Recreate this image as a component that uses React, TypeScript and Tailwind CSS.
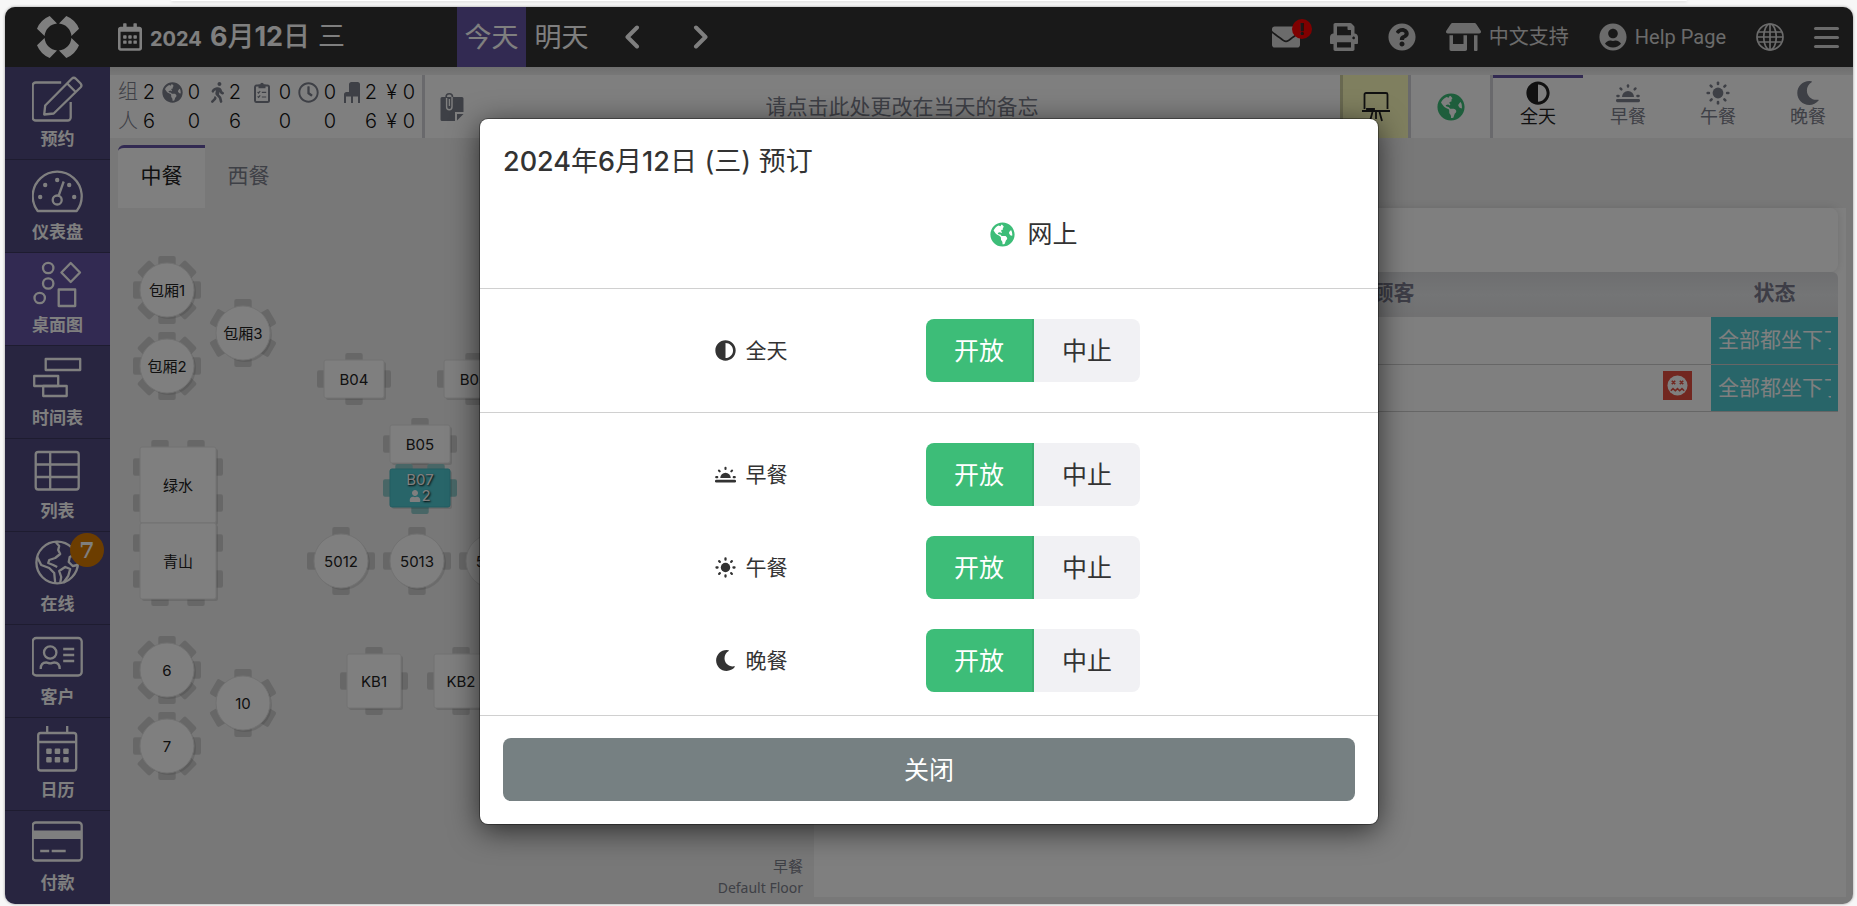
import type { ReactNode } from "react";
import {
  FaAdjust,
  FaEnvelope,
  FaGlobeAmericas,
  FaMoon,
  FaPrint,
  FaQuestionCircle,
  FaRegCalendarAlt,
  FaRegClock,
  FaStoreAlt,
  FaUser,
  FaUserCircle,
  FaWalking,
} from "react-icons/fa";

/* ---------- Small solid icons ---------- */

function SunIcon({ className }: { className?: string }) {
  return (
    <svg viewBox="0 0 24 24" className={className} fill="currentColor" aria-hidden="true">
      <circle cx="12" cy="12" r="5.4" />
      {[0, 45, 90, 135, 180, 225, 270, 315].map((a) => (
        <rect key={a} x="10.7" y="0.4" width="2.6" height="3.8" rx="1.2" transform={`rotate(${a} 12 12)`} />
      ))}
    </svg>
  );
}

function SunriseIcon({ className }: { className?: string }) {
  return (
    <svg viewBox="0 0 24 24" className={className} fill="currentColor" aria-hidden="true">
      <path d="M6 16a6 6 0 0 1 12 0Z" />
      {[-90, -45, 0, 45, 90].map((a) => (
        <rect key={a} x="10.8" y="3.2" width="2.4" height="3.6" rx="1.1" transform={`rotate(${a} 12 15)`} />
      ))}
      <rect x="0" y="18" width="24" height="3.2" rx="1.4" />
    </svg>
  );
}

function ClipboardIcon({ className }: { className?: string }) {
  return (
    <svg viewBox="0 0 16 21" className={className} fill="none" stroke="currentColor" aria-hidden="true">
      <rect x="1" y="3.6" width="14" height="16.4" rx="1.5" strokeWidth="2" />
      <path d="M4.5 2.5h1.7a1.8 1.8 0 0 1 3.6 0h1.7v3.8h-7Z" fill="currentColor" stroke="none" />
      <path d="m3.6 10 1 1 1.6-2M3.6 14.4l1 1 1.6-2M7.8 10.4h4.4M7.8 15h4.4" strokeWidth="1.2" />
    </svg>
  );
}

function ChairIcon({ className }: { className?: string }) {
  return (
    <svg viewBox="0 0 16 21" className={className} fill="currentColor" aria-hidden="true">
      <path d="M5 2.5A2.5 2.5 0 0 1 7.500 0h6A2.500 2.500 0 0 1 16 2.500V21h-2v-6.500H9V21H7v-6.500H2V21H0v-8.500C0 11 1 10 2.500 10H5Z" />
    </svg>
  );
}

function NoteIcon({ className }: { className?: string }) {
  return (
    <svg viewBox="0 0 24 28" className={className} aria-hidden="true">
      <path d="M2 4h20a1.500 1.500 0 0 1 1.500 1.500V19H15v9H2a1.500 1.500 0 0 1-1.500-1.500v-21A1.500 1.500 0 0 1 2 4Z" fill="currentColor" />
      <path d="M17 21h6.500L17 27.500Z" fill="currentColor" />
      <path d="M12.500 6v8a3.200 3.200 0 0 1-6.400 0V4a3.200 3.200 0 0 1 6.400 0" fill="none" stroke="currentColor" strokeWidth="1.600" />
      <path d="M12 4v10a2.700 2.700 0 0 1-5.400 0V5" fill="none" stroke="#fff" strokeWidth="1.400" />
      <path d="M9.400 6v7" stroke="#fff" strokeWidth="1.300" />
    </svg>
  );
}

function EaselIcon({ className }: { className?: string }) {
  return (
    <svg viewBox="0 0 28 30" className={className} fill="none" stroke="currentColor" strokeWidth="1.800" aria-hidden="true">
      <path d="M2.500 17V2.500a1.500 1.500 0 0 1 1.500-1.500h20a1.500 1.500 0 0 1 1.500 1.500V17M0 19h28M10.500 20 8 29M14 20v7M17.500 20l2.500 9" />
      <path d="M5 17h7v2H5Z" fill="currentColor" />
    </svg>
  );
}

function GlobeLineIcon({ className }: { className?: string }) {
  return (
    <svg viewBox="0 0 28 28" className={className} fill="none" stroke="currentColor" strokeWidth="1.700" aria-hidden="true">
      <circle cx="14" cy="14" r="13" />
      <ellipse cx="14" cy="14" rx="6.300" ry="13" />
      <path d="M14 1v26M2.500 9h23M2.500 19h23M1 14h26" />
    </svg>
  );
}

function DizzyIcon({ className }: { className?: string }) {
  return (
    <svg viewBox="0 0 22 22" className={className} aria-hidden="true">
      <circle cx="11" cy="11" r="10.500" fill="#fff" />
      <path
        d="m5 6 3.600 3.600M8.600 6 5 9.600M13.400 6 17 9.600M17 6l-3.600 3.600M4 16.500l2.300-2.200 2.400 2.200 2.300-2.200 2.300 2.200 2.400-2.200 2.300 2.200"
        fill="none"
        stroke="#e44f40"
        strokeWidth="1.700"
      />
    </svg>
  );
}

function Logo() {
  return (
    <svg viewBox="-23 -23 46 46" className="size-[46px]" fill="currentColor" aria-hidden="true">
      {[0, 90, 180, 270].map((a) => (
        <path
          key={a}
          transform={`rotate(${a})`}
          d="M8.300-21 1-13.400A13.500 13.500 0 0 1 13.400-1L21-8.300A23 23 0 0 0 8.300-21Z"
        />
      ))}
    </svg>
  );
}

/* ---------- Sidebar ---------- */

const navItems: { label: string; active?: boolean; badge?: number; art: ReactNode }[] = [
  {
    label: "预约",
    art: (
      <>
        <path d="M30 7.500H4.500A3 3 0 0 0 1.500 10.500v32a3 3 0 0 0 3 3h32a3 3 0 0 0 3-3V27" />
        <path d="M13 39.500l1-9L40.500 3.800a3 3 0 0 1 4.200 0l4.500 4.500a3 3 0 0 1 0 4.200L22.500 38.500ZM36 8.500l8.500 8.500" />
      </>
    ),
  },
  {
    label: "仪表盘",
    art: (
      <>
        <path d="M6.500 43a24.500 24.500 0 1 1 39 0Z" />
        <circle cx="26" cy="32" r="4.500" />
        <path d="m27.500 27.500 5-14" />
        <g fill="currentColor" stroke="none">
          <circle cx="9" cy="29" r="2.200" />
          <circle cx="14" cy="17" r="2.200" />
          <circle cx="26" cy="12" r="2.200" />
          <circle cx="38" cy="17" r="2.200" />
          <circle cx="43" cy="29" r="2.200" />
        </g>
      </>
    ),
  },
  {
    label: "桌面图",
    active: true,
    art: (
      <>
        <circle cx="17" cy="7" r="5.200" />
        <circle cx="17" cy="22.500" r="5.200" />
        <circle cx="8.500" cy="37" r="5.200" />
        <path d="m39.500 2 9.300 9.500-9.300 9.500-9.300-9.500Z" />
        <rect x="27.500" y="28.500" width="16.500" height="16.500" />
      </>
    ),
  },
  {
    label: "时间表",
    art: (
      <>
        <rect x="14.500" y="5" width="34.500" height="11" />
        <rect x="3" y="22" width="24" height="10" />
        <rect x="12" y="32" width="23.500" height="10" />
      </>
    ),
  },
  {
    label: "列表",
    art: (
      <>
        <rect x="4.500" y="5" width="43" height="37.500" rx="2.500" />
        <path d="M19 5v37.500M4.500 17.500h43M4.500 30h43" />
      </>
    ),
  },
  {
    label: "在线",
    badge: 7,
    art: (
      <>
        <circle cx="26" cy="22.500" r="20.800" />
        <path d="M24.500 2l3.500 4-1 4 2 4-5 4-6 2-1 3 5 2 4 2M6 17l4 8 8 3 5 5 1 10M29 43l1-6-2-6 6-4 5 2-2 7-5 7M44.500 14l-6 3-1 5 4 4 5-1" />
      </>
    ),
  },
  {
    label: "客户",
    art: (
      <>
        <rect x="1.500" y="5" width="49" height="37.500" rx="3.500" />
        <circle cx="19" cy="19.500" r="6.200" />
        <path d="M9.500 36c0-4.500 2.500-6.500 5.500-6.500 1.500 0 2 .8 4 .8s2.500-.8 4-.8c3 0 5.500 2 5.500 6.500M32 16h11M32 22h11M32 28h11" />
      </>
    ),
  },
  {
    label: "日历",
    art: (
      <>
        <rect x="7" y="7" width="38" height="37.500" rx="2.500" />
        <path d="M7 16h38M16 0v7M36 0v7" />
        <g fill="currentColor" stroke="none">
          {[15, 23.5, 32].map((x) => (
            <g key={x}>
              <rect x={x} y="22.500" width="5.500" height="5.500" rx="1" />
              <rect x={x} y="31" width="5.500" height="5.500" rx="1" />
            </g>
          ))}
        </g>
      </>
    ),
  },
  {
    label: "付款",
    art: (
      <>
        <rect x="1.500" y="3.500" width="49" height="38" rx="3" />
        <path d="M1.500 11.500h49v8.500h-49Z" fill="currentColor" stroke="none" />
        <path d="M9 32h9M20.500 32h14" />
      </>
    ),
  },
];

function Sidebar() {
  return (
    <nav className="flex w-[105px] shrink-0 flex-col bg-[#504a80]">
      {navItems.map((item) => (
        <a
          key={item.label}
          href="#"
          className={`relative flex min-h-[93px] flex-1 flex-col items-center gap-1 border-b border-[#3c3860] pt-2 text-[17px] leading-6 font-bold text-white last:border-b-0 ${
            item.active ? "bg-[#6454a4]" : ""
          }`}
        >
          <svg viewBox="0.8 0 52 48" className="h-12 w-[52px]" fill="none" stroke="currentColor" strokeWidth="2.300" strokeLinejoin="round" aria-hidden="true">
            {item.art}
          </svg>
          {item.label}
          {item.badge && (
            <span className="absolute top-px right-1.5 flex size-[34px] items-center justify-center rounded-full bg-[#d97b00] font-['DejaVu_Serif',serif] text-[22px]">
              {item.badge}
            </span>
          )}
        </a>
      ))}
    </nav>
  );
}

/* ---------- Header ---------- */

function Header() {
  return (
    <header className="flex h-[60px] shrink-0 items-stretch bg-[#333] text-white">
      <a href="#" aria-label="Home" className="flex w-[105px] shrink-0 items-center justify-center">
        <Logo />
      </a>
      <button className="flex w-[347px] shrink-0 items-center gap-2 pl-2 font-bold">
        <FaRegCalendarAlt className="h-7 w-6 shrink-0" />
        <span className="pt-1 text-[20px] leading-8">2024</span>
        <span className="text-[27px] leading-8">
          6<span className="font-medium">月</span>12<span className="font-medium">日</span>
          <span className="pl-2 font-normal">三</span>
        </span>
      </button>
      <button className="w-[69px] bg-[#6454a4] pt-0.5 text-[27px]">今天</button>
      <button className="w-[71px] pt-0.5 text-[27px]">明天</button>
      <button aria-label="Previous day" className="flex w-[70px] items-center justify-center">
        <svg viewBox="0 0 16 24" className="h-6 w-4" fill="none" stroke="currentColor" strokeWidth="4" strokeLinecap="round" strokeLinejoin="round">
          <path d="M13 2.500 3.500 12l9.500 9.500" />
        </svg>
      </button>
      <button aria-label="Next day" className="flex w-[68px] items-center justify-center">
        <svg viewBox="0 0 16 24" className="h-6 w-4" fill="none" stroke="currentColor" strokeWidth="4" strokeLinecap="round" strokeLinejoin="round">
          <path d="m3 2.500 9.500 9.500L3 21.500" />
        </svg>
      </button>
      <div className="ml-auto flex items-center gap-[30px] pr-[14px] text-[20px] text-[#d6d6d6]">
        <button aria-label="Messages" className="relative">
          <FaEnvelope className="size-7" />
          <span className="absolute -top-1 -right-3 flex size-5 items-center justify-center rounded-full bg-[#ff0000] text-[16px] leading-none font-black text-[#333]">
            !
          </span>
        </button>
        <button aria-label="Print">
          <FaPrint className="size-7" />
        </button>
        <button aria-label="Help">
          <FaQuestionCircle className="size-7" />
        </button>
        <a href="#" className="flex items-center gap-2">
          <FaStoreAlt className="h-7 w-[35px]" />
          中文支持
        </a>
        <a href="#" className="flex items-center gap-2">
          <FaUserCircle className="size-7" />
          <span className="font-['Roboto',sans-serif]">Help Page</span>
        </a>
        <button aria-label="Language">
          <GlobeLineIcon className="size-7" />
        </button>
        <button aria-label="Menu" className="flex w-[25px] flex-col gap-[6px]">
          <span className="h-[3px] rounded-full bg-current" />
          <span className="h-[3px] rounded-full bg-current" />
          <span className="h-[3px] rounded-full bg-current" />
        </button>
      </div>
    </header>
  );
}

/* ---------- Day summary bar ---------- */

function Stat({ icon, value }: { icon?: ReactNode; value: string }) {
  return (
    <span className="flex items-center justify-end gap-[5px]">
      <span className="text-[#7d808c]">{icon}</span>
      {value}
    </span>
  );
}

const meals = [
  { label: "全天", icon: <FaAdjust className="size-full" /> },
  { label: "早餐", icon: <SunriseIcon className="size-full" /> },
  { label: "午餐", icon: <SunIcon className="size-full" /> },
  { label: "晚餐", icon: <FaMoon className="size-full" /> },
];

function SummaryBar() {
  return (
    <div className="bg-gradient-to-b from-[#dedede] to-[#f0f0f0] to-[8px] pt-2">
      <div className="flex h-[63px] bg-white">
        <div className="grid w-[312px] shrink-0 grid-cols-[20px_17px_45px_41px_50px_45px_41px_38px] content-center pl-2 text-[20px] leading-[29px] font-light text-[#111]">
          <span className="text-[#7d808c]">组</span>
          <Stat value="2" />
          <Stat icon={<FaGlobeAmericas className="size-[21px]" />} value="0" />
          <Stat icon={<FaWalking className="h-[21px] w-[13px]" />} value="2" />
          <Stat icon={<ClipboardIcon className="mr-1 h-[21px] w-4" />} value="0" />
          <Stat icon={<FaRegClock className="size-[21px]" />} value="0" />
          <Stat icon={<ChairIcon className="h-[21px] w-4" />} value="2" />
          <Stat value="¥ 0" />
          <span className="text-[#7d808c]">人</span>
          <Stat value="6" />
          <Stat value="0" />
          <Stat value="6" />
          <Stat value="0" />
          <Stat value="0" />
          <Stat value="6" />
          <Stat value="¥ 0" />
        </div>
        <button className="flex flex-1 items-center border-l-[3px] border-[#d2d3d8] pl-[15px] text-[21px] text-[#7d808c]">
          <NoteIcon className="h-7 w-6" />
          <span className="flex-1 text-center">请点击此处更改在当天的备忘</span>
        </button>
        <button aria-label="Floor plan" className="flex w-[68px] items-center justify-center border-l-[3px] border-[#d0d0a0] bg-[#ffffbf] text-[#222]">
          <EaselIcon className="h-[30px] w-7" />
        </button>
        <button aria-label="Online booking" className="flex w-[82px] items-center justify-center border-l-[3px] border-[#d2d3d8] text-[#3dbd78]">
          <FaGlobeAmericas className="size-7" />
        </button>
        <div className="flex border-l-[3px] border-[#d2d3d8]">
          {meals.map((m, i) => (
            <button
              key={m.label}
              className={`flex w-[90px] flex-col items-center border-t-[3px] pt-[3px] text-[18px] leading-6 ${
                i === 0 ? "border-[#6454a4] text-[#222]" : "border-transparent text-[#7d808c]"
              }`}
            >
              <span className="size-6">{m.icon}</span>
              {m.label}
            </button>
          ))}
        </div>
      </div>
    </div>
  );
}

/* ---------- Floor plan ---------- */

type Chair = { x: number; y: number; a: number };
type FloorTable = {
  label: string;
  x: number;
  y: number;
  w: number;
  h: number;
  round?: boolean;
  chairs: Chair[];
  guests?: number;
};

const ring = (angles: number[]): Chair[] => angles.map((a) => ({ x: 0, y: -27, a }));
const eight = ring([0, 45, 90, 135, 180, 225, 270, 315]);
const six = ring([0, 60, 120, 180, 240, 300]);
const four = ring([0, 90, 180, 270]);

const sides = (hw: number, hh: number): Chair[] => [
  { x: 0, y: -hh, a: 0 },
  { x: 0, y: -hw, a: 90 },
  { x: 0, y: -hh, a: 180 },
  { x: 0, y: -hw, a: 270 },
];

const pairs = (top: number): Chair[] => [
  { x: -18, y: -38, a: top },
  { x: 18, y: -38, a: top },
  { x: -18, y: -38, a: 90 },
  { x: 18, y: -38, a: 90 },
  { x: -18, y: -38, a: 270 },
  { x: 18, y: -38, a: 270 },
];

const bigTop = pairs(0);
const bigBottom = pairs(180);

const floorTables: FloorTable[] = [
  { label: "包厢1", x: 57, y: 82, w: 54, h: 54, round: true, chairs: eight },
  { label: "包厢2", x: 57, y: 158, w: 54, h: 54, round: true, chairs: eight },
  { label: "包厢3", x: 133, y: 125, w: 54, h: 54, round: true, chairs: six },
  { label: "B04", x: 244, y: 171, w: 60, h: 38, chairs: sides(30, 19) },
  { label: "B03", x: 364, y: 171, w: 60, h: 38, chairs: sides(30, 19) },
  { label: "B05", x: 310, y: 236, w: 60, h: 38, chairs: sides(30, 19) },
  {
    label: "B07",
    x: 310,
    y: 280,
    w: 60,
    h: 38,
    guests: 2,
    chairs: [
      { x: -16, y: -17, a: 0 },
      { x: 16, y: -17, a: 0 },
      { x: 0, y: -30, a: 90 },
      { x: 0, y: -19, a: 180 },
      { x: 0, y: -30, a: 270 },
    ],
  },
  { label: "绿水", x: 68, y: 277, w: 76, h: 76, chairs: bigTop },
  { label: "青山", x: 68, y: 353, w: 76, h: 76, chairs: bigBottom },
  { label: "5012", x: 231, y: 353, w: 54, h: 54, round: true, chairs: four },
  { label: "5013", x: 307, y: 353, w: 54, h: 54, round: true, chairs: four },
  { label: "5014", x: 383, y: 353, w: 54, h: 54, round: true, chairs: four },
  { label: "6", x: 57, y: 462, w: 54, h: 54, round: true, chairs: eight },
  { label: "7", x: 57, y: 538, w: 54, h: 54, round: true, chairs: eight },
  { label: "10", x: 133, y: 495, w: 54, h: 54, round: true, chairs: six },
  { label: "KB1", x: 264, y: 473, w: 54, h: 54, chairs: sides(27, 27) },
  { label: "KB2", x: 351, y: 473, w: 54, h: 54, chairs: sides(27, 27) },
];

function TableNode({ t }: { t: FloorTable }) {
  const seated = t.guests !== undefined;
  return (
    <div className="absolute size-[96px] -translate-x-1/2 -translate-y-1/2" style={{ left: t.x, top: t.y }}>
      <svg viewBox="-48 -48 96 96" className="absolute inset-0 size-[96px]" aria-hidden="true">
        {t.chairs.map((c, i) => (
          <rect
            key={i}
            x={c.x - 8.7}
            y={c.y - 7}
            width="17.4"
            height="13"
            rx="2"
            transform={`rotate(${c.a})`}
            fill={seated ? "#90cccc" : "#cfcfcf"}
          />
        ))}
        <rect
          x={-t.w / 2 + 2}
          y={-t.h / 2 + 2}
          width={t.w}
          height={t.h}
          rx={t.round ? 27 : 2}
          fill="#000"
          opacity="0.1"
        />
        <rect
          x={-t.w / 2}
          y={-t.h / 2}
          width={t.w}
          height={t.h}
          rx={t.round ? 27 : 2}
          fill={seated ? "#50cad3" : "#fff"}
          stroke={seated ? "#45b9c2" : "#e4e4e4"}
        />
      </svg>
      <div
        className={`relative flex h-full flex-col items-center justify-center text-[15px] leading-4 ${
          seated ? "text-white [text-shadow:1px_1px_2px_#000]" : "pt-[2px] text-[#222]"
        }`}
      >
        {t.label}
        {seated && (
          <span className="flex items-center">
            <FaUser className="size-3" />
            {t.guests}
          </span>
        )}
      </div>
    </div>
  );
}

function FloorPlan() {
  return (
    <section className="flex w-[704px] shrink-0 flex-col">
      <div className="relative flex-1">
        {floorTables.map((t) => (
          <TableNode key={t.label} t={t} />
        ))}
      </div>
      <p className="pr-[11px] pb-[6px] text-right text-[15px] leading-[21px] text-[#7d808c]">
        早餐
        <br />
        <span className="font-['Noto_Sans',sans-serif] text-[14px]">Default Floor</span>
      </p>
    </section>
  );
}

/* ---------- Booking list ---------- */

function BookingList() {
  return (
    <section className="mr-[7px] mb-[7px] flex-1 bg-white px-2">
      <div className="h-16 rounded-lg bg-white shadow-[0_0_8px_rgba(0,0,0,0.12)]" />
      <table className="w-full table-fixed text-[21px]">
        <thead>
          <tr className="h-[45px] bg-gradient-to-b from-[#dcdde0] via-[#e8eaec] to-[#e2e2e4] text-[#7a7a8c]">
            <th className="w-1/4" />
            <th className="pb-1 font-bold">顾客</th>
            <th className="w-[127px] rounded-tr-md pb-1 font-bold">状态</th>
          </tr>
        </thead>
        <tbody>
          {[false, true].map((flagged) => (
            <tr key={String(flagged)} className="h-[47px] border-b border-[#ccc]">
              <td />
              <td className="pr-[19px] pb-1">
                {flagged && (
                  <span className="ml-auto flex size-[29px] items-center justify-center bg-[#e44f40]">
                    <DizzyIcon className="size-[21px]" />
                  </span>
                )}
              </td>
              <td className="bg-[#50cad3] px-[7px] text-white">
                <div className="overflow-hidden leading-7 whitespace-nowrap">全部都坐下了</div>
              </td>
            </tr>
          ))}
        </tbody>
      </table>
    </section>
  );
}

/* ---------- Dialog ---------- */

function MealRow({ label, icon }: { label: string; icon: ReactNode }) {
  return (
    <div className="grid grid-cols-[282px_282px] items-center pl-[130px]" role="group" aria-label={label}>
      <span className="flex items-center justify-center gap-[10px] text-[21px] leading-8">
        <span className="size-[21px]">{icon}</span>
        {label}
      </span>
      <div className="flex h-[63px] justify-center text-[25px]">
        <button aria-pressed="true" className="w-[108px] rounded-l-lg border-r-2 border-[#38ae6e] bg-[#3dbd78] pt-0.5 text-white">
          开放
        </button>
        <button aria-pressed="false" className="w-[106px] rounded-r-lg bg-[#f1f1f4] pt-0.5">
          中止
        </button>
      </div>
    </div>
  );
}

function BookingDialog() {
  return (
    <div
      role="dialog"
      aria-modal="true"
      aria-labelledby="dialog-title"
      className="w-[898px] rounded-lg bg-white text-[#333] shadow-[0_0_0_1px_rgba(0,0,0,0.35),0_6px_30px_rgba(0,0,0,0.65)]"
    >
      <h2 id="dialog-title" className="px-[23px] pt-6 text-[27px] leading-[38px] font-medium">
        2024<span className="font-normal">年</span>6<span className="font-normal">月</span>12
        <span className="font-normal">日 (三) 预订</span>
      </h2>
      <div className="grid h-[107px] grid-cols-[282px_284px] items-center pl-[130px]">
        <span className="col-start-2 flex items-center justify-center gap-3 text-[25px]">
          <FaGlobeAmericas className="size-[25px] text-[#3dbd78]" />
          网上
        </span>
      </div>
      <div className="border-t border-[#d0d0d0] py-[30px]">
        <MealRow {...meals[0]} />
      </div>
      <div className="flex flex-col gap-[30px] border-t border-[#d0d0d0] pt-[30px] pb-[23px]">
        {meals.slice(1).map((m) => (
          <MealRow key={m.label} {...m} />
        ))}
      </div>
      <div className="border-t border-[#d0d0d0] px-[23px] pt-[22px] pb-[23px]">
        <button className="h-[63px] w-full rounded-lg bg-[#768082] pt-0.5 text-[25px] text-white">关闭</button>
      </div>
    </div>
  );
}

export default function App() {
  return (
    <div className="flex min-h-screen flex-col bg-[#f7f7f7] pr-1 pb-0.5 pl-[5px] font-['Inter','Noto_Sans_CJK_SC',sans-serif]">
      <div className="mx-[9%] mb-1.5 h-px rounded-b bg-white shadow-[0_1px_3px_rgba(0,0,0,0.2)]" />
      <div className="relative flex flex-1 flex-col overflow-hidden rounded-[10px] bg-[#f0f0f0] shadow-[0_0_3px_rgba(0,0,0,0.4)]">
        <Header />
        <div className="flex flex-1">
          <Sidebar />
          <main className="flex min-w-0 flex-1 flex-col">
            <SummaryBar />
            <div className="flex h-[70px] items-end pl-2 text-[21px]">
              <button className="h-[63px] w-[87px] rounded-tl-md border-t-[3px] border-[#6454a4] bg-white pb-[5px] text-[#222]">中餐</button>
              <button className="h-[63px] w-[87px] border-t-[3px] border-transparent pb-[5px] text-[#7d808c]">西餐</button>
            </div>
            <div className="flex flex-1">
              <FloorPlan />
              <BookingList />
            </div>
          </main>
        </div>
        <div className="absolute inset-0 flex items-start justify-center bg-black/50 pt-[112px]">
          <BookingDialog />
        </div>
      </div>
    </div>
  );
}
